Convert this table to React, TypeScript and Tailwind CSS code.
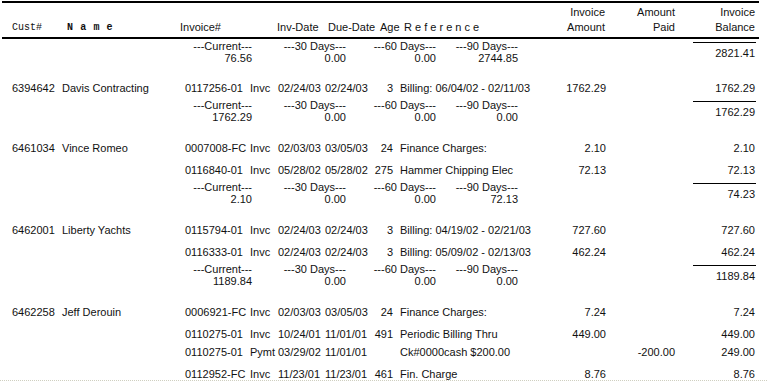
type Line = {
  inv: string;
  type: string;
  invDate: string;
  dueDate: string;
  age: string;
  ref: string;
  amt: string;
  paid: string;
  bal: string;
  short?: boolean;
};

type Group = {
  cust?: string;
  name?: string;
  lines: Line[];
  aging: [string, string, string, string];
  total: string;
};

const groups: Group[] = [
  { lines: [], aging: ["76.56", "0.00", "0.00", "2744.85"], total: "2821.41" },
  {
    cust: "6394642",
    name: "Davis Contracting",
    lines: [
      { inv: "0117256-01", type: "Invc", invDate: "02/24/03", dueDate: "02/24/03", age: "3", ref: "Billing: 06/04/02 - 02/11/03", amt: "1762.29", paid: "", bal: "1762.29" },
    ],
    aging: ["1762.29", "0.00", "0.00", "0.00"],
    total: "1762.29",
  },
  {
    cust: "6461034",
    name: "Vince Romeo",
    lines: [
      { inv: "0007008-FC", type: "Invc", invDate: "02/03/03", dueDate: "03/05/03", age: "24", ref: "Finance Charges:", amt: "2.10", paid: "", bal: "2.10" },
      { inv: "0116840-01", type: "Invc", invDate: "05/28/02", dueDate: "05/28/02", age: "275", ref: "Hammer Chipping Elec", amt: "72.13", paid: "", bal: "72.13" },
    ],
    aging: ["2.10", "0.00", "0.00", "72.13"],
    total: "74.23",
  },
  {
    cust: "6462001",
    name: "Liberty Yachts",
    lines: [
      { inv: "0115794-01", type: "Invc", invDate: "02/24/03", dueDate: "02/24/03", age: "3", ref: "Billing: 04/19/02 - 02/21/03", amt: "727.60", paid: "", bal: "727.60" },
      { inv: "0116333-01", type: "Invc", invDate: "02/24/03", dueDate: "02/24/03", age: "3", ref: "Billing: 05/09/02 - 02/13/03", amt: "462.24", paid: "", bal: "462.24" },
    ],
    aging: ["1189.84", "0.00", "0.00", "0.00"],
    total: "1189.84",
  },
  {
    cust: "6462258",
    name: "Jeff Derouin",
    lines: [
      { inv: "0006921-FC", type: "Invc", invDate: "02/03/03", dueDate: "03/05/03", age: "24", ref: "Finance Charges:", amt: "7.24", paid: "", bal: "7.24" },
      { inv: "0110275-01", type: "Invc", invDate: "10/24/01", dueDate: "11/01/01", age: "491", ref: "Periodic Billing Thru", amt: "449.00", paid: "", bal: "449.00" },
      { inv: "0110275-01", type: "Pymt", invDate: "03/29/02", dueDate: "11/01/01", age: "", ref: "Ck#0000cash $200.00", amt: "", paid: "-200.00", bal: "249.00", short: true },
      { inv: "0112952-FC", type: "Invc", invDate: "11/23/01", dueDate: "11/23/01", age: "461", ref: "Fin. Charge", amt: "8.76", paid: "", bal: "8.76" },
    ],
    aging: ["7.24", "0.00", "0.00", "0.00"],
    total: "0.00",
  },
];

const agingLabels = ["---Current---", "---30 Days---", "---60 Days---", "---90 Days---"];
const agingWidths = ["w-[252px]", "w-[94px]", "w-[90px]", "w-[82px]"];

function Row({ line, cust, name }: { line: Line; cust?: string; name?: string }) {
  return (
    <div className={`flex whitespace-nowrap ${line.short ? "h-[18px] items-start leading-[14px]" : "h-[22px] items-center"}`}>
      <div className="w-[62px] shrink-0 pl-[12px]">{cust}</div>
      <div className="w-[123px] shrink-0">{name}</div>
      <div className="w-[65px] shrink-0">{line.inv}</div>
      <div className="w-[28px] shrink-0">{line.type}</div>
      <div className="w-[47px] shrink-0">{line.invDate}</div>
      <div className="w-[48px] shrink-0">{line.dueDate}</div>
      <div className="w-[20px] shrink-0 text-right">{line.age}</div>
      <div className="w-[147px] shrink-0 pl-[7px]">{line.ref}</div>
      <div className="w-[66px] shrink-0 text-right">{line.amt}</div>
      <div className="w-[69px] shrink-0 text-right">{line.paid}</div>
      <div className="w-[80px] shrink-0 text-right">{line.bal}</div>
    </div>
  );
}

function Aging({ values, total }: { values: string[]; total: string }) {
  return (
    <div className="flex h-[24px] whitespace-nowrap leading-[12px]">
      {values.map((v, i) => (
        <div key={i} className={`${agingWidths[i]} shrink-0 text-right`}>
          <div>{agingLabels[i]}</div>
          <div>{v}</div>
        </div>
      ))}
      <div className="w-[175px] shrink-0" />
      <div className="w-[63px] shrink-0">
        <div className="mt-[2px] h-[20px] border-t border-black pr-[1px] text-right leading-[20px]">{total}</div>
      </div>
    </div>
  );
}

export default function App() {
  return (
    <div className="relative h-[385px] w-[767px] overflow-hidden bg-white pt-[1px] font-['Liberation_Sans',Arial,sans-serif] text-[11px] text-[#111]">
      {/* Column headings */}
      <div className="ml-[2px] flex w-[757px] border-y-2 border-black py-[2px] leading-[15px] whitespace-nowrap">
        <div className="flex w-[538px] shrink-0 items-end">
          <span className="w-[65px] shrink-0 pl-[10px] font-['Liberation_Mono',monospace] text-[10px]">Cust#</span>
          <span className="w-[113px] shrink-0 font-['Liberation_Mono',monospace] text-[10px] font-bold tracking-[0.6px]">N a m e</span>
          <span className="w-[97px] shrink-0">Invoice#</span>
          <span className="w-[51px] shrink-0">Inv-Date</span>
          <span className="w-[52px] shrink-0">Due-Date</span>
          <span className="w-[24px] shrink-0">Age</span>
          <span>R e f e r e n c e</span>
        </div>
        <div className="w-[65px] shrink-0 text-right">
          <div>Invoice</div>
          <div>Amount</div>
        </div>
        <div className="w-[70px] shrink-0 text-right">
          <div>Amount</div>
          <div>Paid</div>
        </div>
        <div className="w-[80px] shrink-0 text-right">
          <div>Invoice</div>
          <div>Balance</div>
        </div>
      </div>

      {/* Customer groups */}
      <div className="flex flex-col">
        {groups.map((g, gi) => (
          <div key={gi} className={gi === 0 ? "mt-[1px]" : gi === 1 ? "mt-[13px]" : "mt-[14px]"}>
            {g.lines.map((l, li) => (
              <Row key={li} line={l} cust={li === 0 ? g.cust : undefined} name={li === 0 ? g.name : undefined} />
            ))}
            {gi < groups.length - 1 && <Aging values={g.aging} total={g.total} />}
          </div>
        ))}
      </div>

      {/* page break marker */}
      <div className="absolute left-0 top-[380px] w-full border-b border-dotted border-[#cfcfc0]" />
    </div>
  );
}
